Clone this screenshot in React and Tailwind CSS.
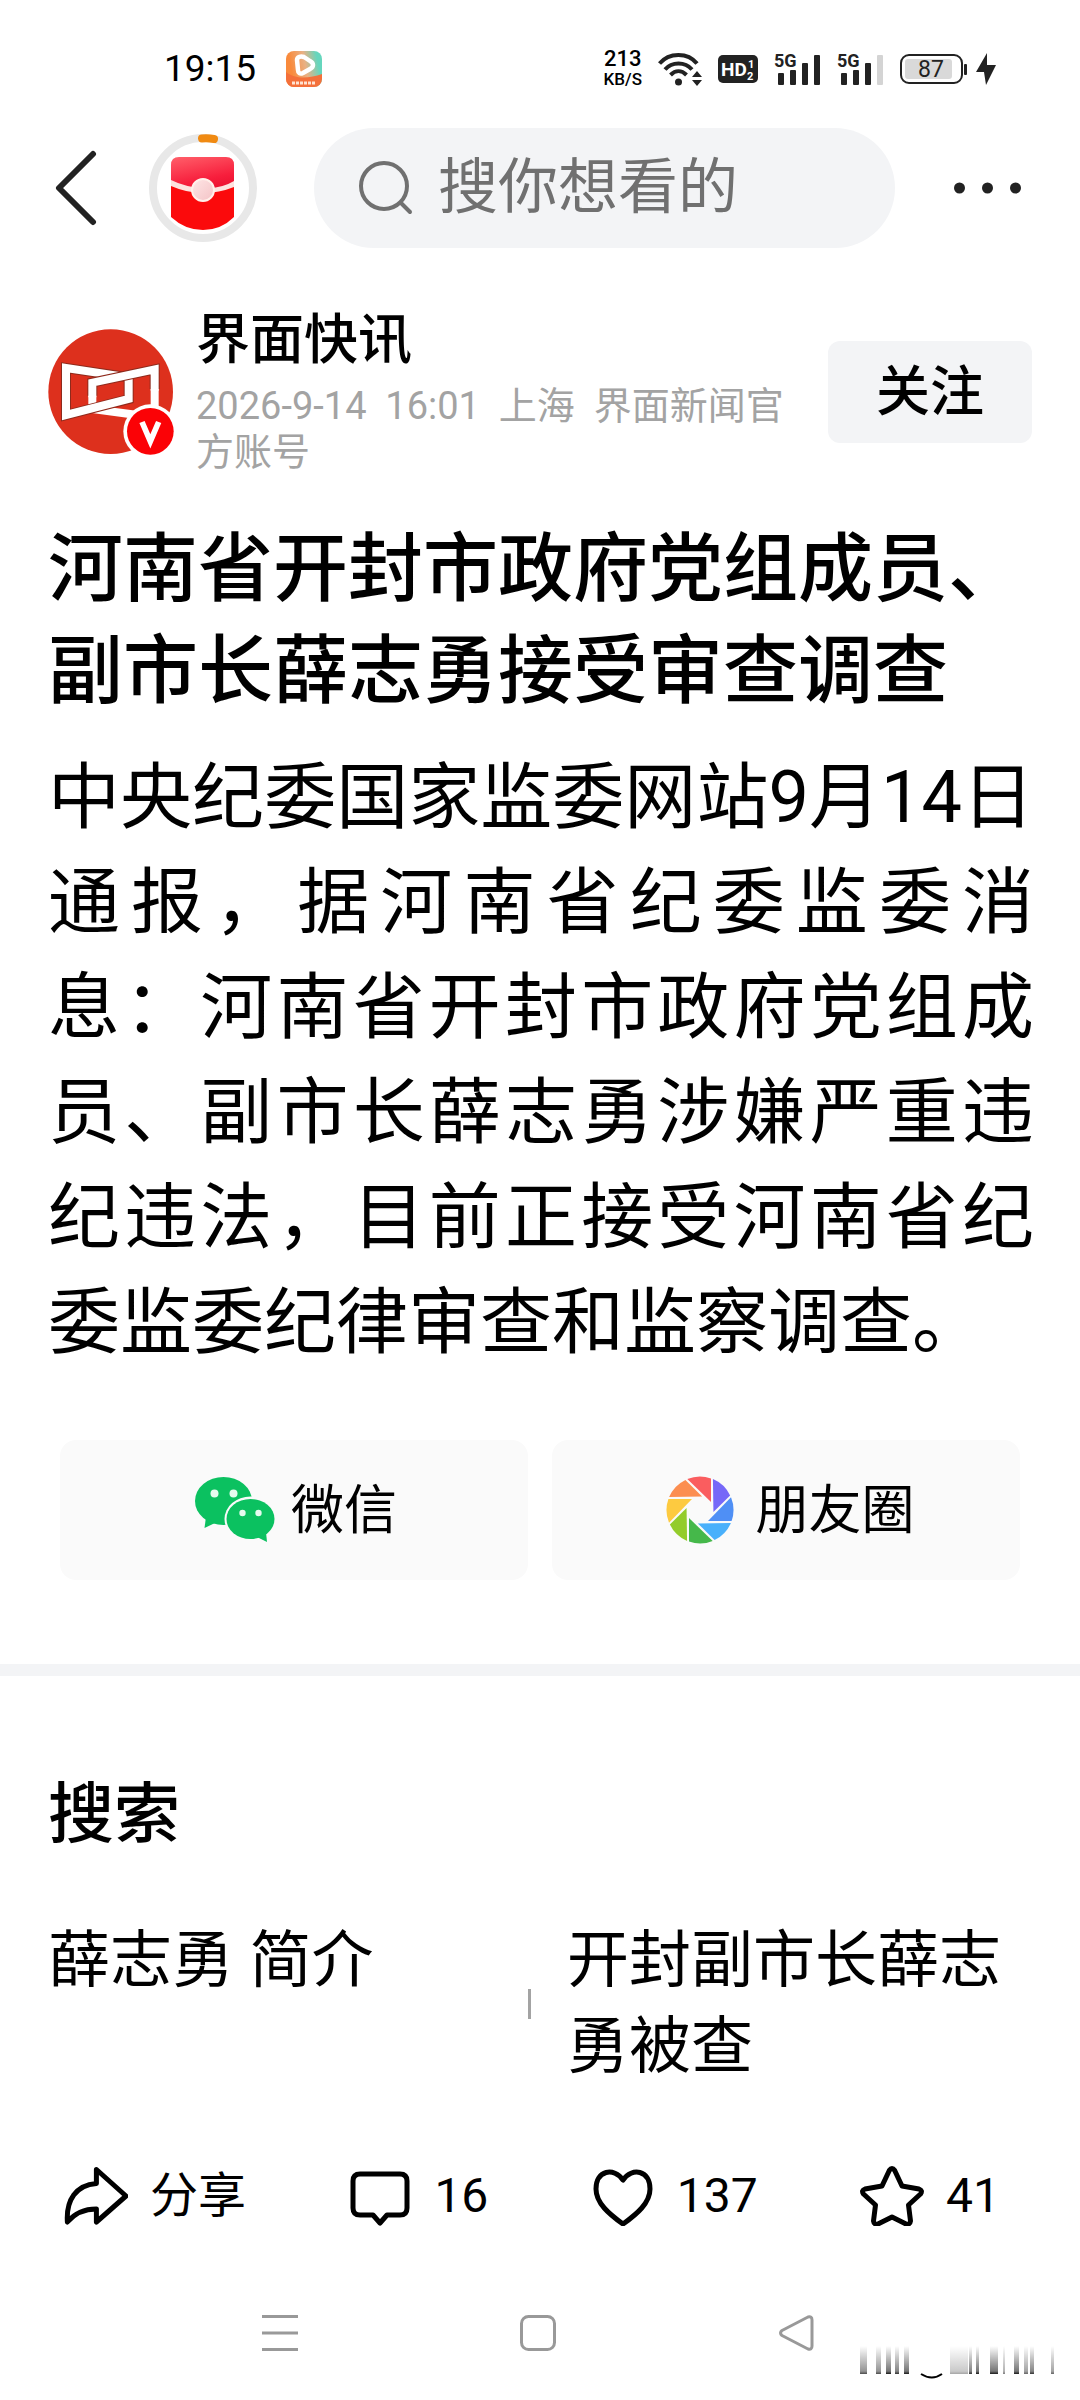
import { useState } from "react";

const shutterColors = [
  "#fa5d5f",
  "#7668f8",
  "#4f8ff5",
  "#49b0fb",
  "#45b84a",
  "#93cc2b",
  "#fdca40",
  "#fc8e50",
];

const related = ["薛志勇 简介", "开封副市长薛志勇被查"];

function AppBadgeIcon() {
  return (
    <svg className="size-9" viewBox="0 0 36 36" aria-hidden="true">
      <defs>
        <linearGradient id="badge" x1="0" y1="0.3" x2="1" y2="0.1">
          <stop offset="0.1" stopColor="#f98a3c" />
          <stop offset="0.5" stopColor="#e9b184" />
          <stop offset="0.85" stopColor="#66d6bd" />
        </linearGradient>
      </defs>
      <rect width="36" height="36" rx="8" fill="url(#badge)" />
      <path d="M0 21C10 29 24 27 36 23V28a8 8 0 0 1-8 8H8a8 8 0 0 1-8-8z" fill="#f4703a" />
      <path
        d="M11 9C11 5.500 15 5 18 6l6 4c4 2 4 6 0 8l-7 4c-3 1.500-5 0-5-3z"
        fill="none"
        stroke="#fff"
        strokeWidth="4.500"
        strokeLinejoin="round"
      />
      <path d="M6 32h24" stroke="#ffe3d2" strokeWidth="3" strokeDasharray="3 1" />
    </svg>
  );
}

function WifiIcon() {
  return (
    <svg className="h-9 w-11" viewBox="0 0 44 36" aria-hidden="true">
      <g fill="none" stroke="#222" strokeWidth="4">
        <path d="M1.500 12.500C11 1 30 1 39 12.500" />
        <path d="M7 18.500c7-8 20-8 27 0" />
        <path d="M12.500 24c5-5 11-5 16 0" />
      </g>
      <circle cx="20.500" cy="31" r="3.500" fill="#222" />
      <path d="M39 20l5 6H34zM39 35l5-6H34z" fill="#222" />
    </svg>
  );
}

function HdIcon() {
  return (
    <svg className="h-7 w-10" viewBox="0 0 40 28" aria-label="HD">
      <rect width="40" height="28" rx="5" fill="#222" />
      <g fill="#fff" fontFamily="Roboto, sans-serif" fontWeight="700">
        <text x="3" y="21" fontSize="19">HD</text>
        <text x="30" y="13" fontSize="11">1</text>
        <text x="29" y="25" fontSize="11">2</text>
      </g>
    </svg>
  );
}

function SignalIcon({ weak }) {
  return (
    <svg className="h-10 w-[47px]" viewBox="0 -4 47 40" aria-label="5G">
      <text x="0" y="14" fontSize="18" fontWeight="700" fontFamily="Roboto, sans-serif" fill="#222">
        5G
      </text>
      <rect x="4" y="20" width="6" height="12" rx="1" fill="#222" />
      <rect x="16" y="17" width="6" height="15" rx="1" fill="#222" />
      <rect x="28" y="10" width="6" height="22" rx="1" fill="#222" />
      <rect x="40" y="2" width="6" height="30" rx="1" fill={weak ? "#d4d4d4" : "#222"} />
    </svg>
  );
}

function BatteryIcon() {
  return (
    <svg className="h-8 w-[68px]" viewBox="0 0 68 32" aria-label="87%">
      <rect x="1" y="2" width="61" height="28" rx="8" fill="#fff" stroke="#222" strokeWidth="2" />
      <rect x="5" y="6" width="47" height="20" rx="3" fill="#d9d9d9" />
      <rect x="64" y="11" width="3" height="11" rx="1" fill="#222" />
      <text x="31" y="24" fontSize="23" textAnchor="middle" fontFamily="Roboto, sans-serif" fill="#222">
        87
      </text>
    </svg>
  );
}

function StatusBar() {
  return (
    <div className="flex h-12 items-center justify-between pl-[164px] pr-[84px] text-black">
      <div className="flex items-center gap-[30px]">
        <span className="text-[37px]">19:15</span>
        <AppBadgeIcon />
      </div>
      <div className="flex items-center">
        <div className="flex flex-col items-center font-medium">
          <span className="text-[22px] leading-5">213</span>
          <span className="text-[17px] leading-5">KB/S</span>
        </div>
        <div className="ml-4 flex items-center gap-4">
          <WifiIcon />
          <HdIcon />
          <SignalIcon />
          <SignalIcon weak />
          <div className="flex items-center gap-2">
            <BatteryIcon />
            <svg className="h-8 w-5" viewBox="0 0 20 32" aria-hidden="true">
              <path d="M11 0L0 19h8L10 32 20 12H11z" fill="#222" />
            </svg>
          </div>
        </div>
      </div>
    </div>
  );
}

function RedPacket() {
  return (
    <svg className="size-[108px]" viewBox="0 0 108 108" aria-hidden="true">
      <defs>
        <linearGradient id="flap" x1="0.2" y1="0" x2="0.6" y2="1">
          <stop offset="0" stopColor="#ff5a66" />
          <stop offset="0.7" stopColor="#f71e3c" />
          <stop offset="1" stopColor="#ec1230" />
        </linearGradient>
        <linearGradient id="knob" x1="0" y1="0" x2="1" y2="1">
          <stop offset="0" stopColor="#ffe6e6" />
          <stop offset="1" stopColor="#f3c3c6" />
        </linearGradient>
      </defs>
      <circle cx="54" cy="54" r="50" fill="#fff" stroke="#e8e8e8" strokeWidth="8" />
      <path d="M53 4.500Q59 4 65 5" fill="none" stroke="#f08a12" strokeWidth="8" strokeLinecap="round" />
      <path d="M22 45h63v38Q72 96 54 96T22 83z" fill="#fb0a0c" />
      <path d="M22 31q0-8 8-8h47q8 0 8 8v17Q54 64 22 48z" fill="url(#flap)" />
      <path d="M22 46Q36 53 54 54T85 47v6Q70 59 54 59T22 52z" fill="#fde3df" />
      <circle cx="54" cy="56" r="11" fill="url(#knob)" stroke="#fff0ea" strokeWidth="2" />
    </svg>
  );
}

function Header() {
  return (
    <header className="mt-[35px] flex h-[120px] items-center pl-[53px] pr-14">
      <button aria-label="返回">
        <svg className="h-[76px] w-11" viewBox="0 0 44 76" aria-hidden="true">
          <path
            d="M40 4L6 38l34 34"
            fill="none"
            stroke="#222"
            strokeWidth="6"
            strokeLinecap="round"
            strokeLinejoin="round"
          />
        </svg>
      </button>
      <button className="ml-[52px]" aria-label="红包">
        <RedPacket />
      </button>
      <label className="ml-[57px] flex h-full min-w-0 flex-1 items-center rounded-full bg-[#f3f4f6] pl-11">
        <svg className="size-14 shrink-0" viewBox="0 0 56 56" aria-hidden="true">
          <g fill="none" stroke="#707070" strokeWidth="4" strokeLinecap="round">
            <circle cx="26" cy="26" r="23" />
            <path d="M43 43l9 9" />
          </g>
        </svg>
        <input
          type="text"
          aria-label="搜索"
          placeholder="搜你想看的"
          className="ml-6 w-full min-w-0 bg-transparent text-[60px] leading-[80px] text-[#707070] outline-none placeholder:text-[#707070]"
        />
      </label>
      <button className="ml-14" aria-label="更多">
        <svg className="h-10 w-[73px]" viewBox="0 0 73 40" fill="#222" aria-hidden="true">
          <circle cx="8.500" cy="20" r="5.500" />
          <circle cx="36.500" cy="20" r="5.500" />
          <circle cx="64.500" cy="20" r="5.500" />
        </svg>
      </button>
    </header>
  );
}

function Avatar() {
  return (
    <svg className="size-[126px] shrink-0" viewBox="0 0 378 378" aria-label="界面快讯">
      <circle cx="188" cy="188" r="187" fill="#dd301d" />
      <g fill="none" strokeLinejoin="miter">
        <path d="M133 161V240L320 265V121z" stroke="#fff" strokeWidth="24" />
        <path d="M54 117L242 145V210L54 258z" stroke="#8f2a1c" strokeWidth="30" />
        <path d="M54 117L242 145V210L54 258z" stroke="#fff" strokeWidth="24" />
        <path d="M133 200V161L320 121V180" stroke="#8f2a1c" strokeWidth="30" />
        <path d="M133 205V161L320 121V185" stroke="#fff" strokeWidth="24" />
      </g>
      <circle cx="307" cy="307" r="81" fill="#fff" />
      <circle cx="307" cy="307" r="70" fill="#fb0206" />
      <path d="M282 279l25 58 25-58" fill="none" stroke="#fff" strokeWidth="17" />
    </svg>
  );
}

function WechatIcon() {
  return (
    <svg className="h-[66px] w-20" viewBox="0 0 80 66" aria-hidden="true">
      <g fill="#0bc160">
        <ellipse cx="28.500" cy="24" rx="28.500" ry="24" />
        <path d="M11 40L9.500 51 20 46z" />
      </g>
      <ellipse cx="55.500" cy="42" rx="26" ry="22.500" fill="#fafafa" />
      <g fill="#0bc160">
        <ellipse cx="55.500" cy="42" rx="24" ry="20" />
        <path d="M62 60l10 5-1-10z" />
      </g>
      <g fill="#e6fbef">
        <circle cx="19.500" cy="16.500" r="4" />
        <circle cx="38.500" cy="16.500" r="4" />
        <circle cx="47.500" cy="36" r="3.200" />
        <circle cx="63.500" cy="36" r="3.200" />
      </g>
    </svg>
  );
}

function MomentsIcon() {
  return (
    <svg className="size-[68px]" viewBox="-34 -34 68 68" aria-hidden="true">
      {shutterColors.map((color, i) => (
        <path
          key={color}
          d="M-12.700-31A33.500 33.500 0 0 1 11-31.600V-8z"
          fill={color}
          transform={`rotate(${i * 45})`}
        />
      ))}
    </svg>
  );
}

function Article() {
  const [followed, setFollowed] = useState(false);

  return (
    <article className="px-12 text-black">
      {/* Author */}
      <div className="mt-[61px] flex items-center">
        <Avatar />
        <div className="ml-[22px] mr-5 min-w-0 flex-1">
          <h2 className="text-[54px] font-medium leading-[64px]">界面快讯</h2>
          <p className="mt-[10px] whitespace-pre-wrap text-[38px] leading-[46px] text-[#a3a3a3]">
            {"2026-9-14  16:01  上海  界面新闻官方账号"}
          </p>
        </div>
        <button
          onClick={() => setFollowed(!followed)}
          className="h-[102px] w-[204px] rounded-xl bg-[#f3f4f6] text-[54px] font-medium"
        >
          {followed ? "已关注" : "关注"}
        </button>
      </div>

      {/* Text */}
      <h1 className="mt-[43px] text-[75px] font-medium leading-[102px]">
        河南省开封市政府党组成员、副市长薛志勇接受审查调查
      </h1>
      <p className="-mr-0.5 mt-[23px] text-justify text-[72px] leading-[105px]">
        中央纪委国家监委网站9月14日通报，据河南省纪委监委消息：河南省开封市政府党组成员、副市长薛志勇涉嫌严重违纪违法，目前正接受河南省纪委监委纪律审查和监察调查。
      </p>

      {/* Share */}
      <div className="mt-[65px] grid grid-cols-2 gap-6 px-3 text-[53px]">
        <button className="flex h-[140px] items-center justify-center gap-4 rounded-2xl bg-[#fafafa] pl-1">
          <WechatIcon />
          <span className="pt-1">微信</span>
        </button>
        <button className="flex h-[140px] items-center justify-center gap-[22px] rounded-2xl bg-[#fafafa] pl-2">
          <MomentsIcon />
          <span className="pt-1">朋友圈</span>
        </button>
      </div>
    </article>
  );
}

function RelatedSearch() {
  return (
    <section className="px-12 text-black">
      <h2 className="mt-[99px] text-[66px] font-medium leading-[80px]">搜索</h2>
      <div className="mt-[63px] flex items-stretch text-[62px] leading-[86px]">
        <a href="#search" className="flex-1">
          {related[0]}
        </a>
        <span className="h-[30px] w-[3px] self-center bg-[#a3a3a3]" />
        <a href="#search" className="ml-9 w-[465px]">
          {related[1]}
        </a>
      </div>
    </section>
  );
}

const actions = [
  {
    label: "分享",
    d: "M3.400 56C2 34 12 19 32.400 17.500V3.500L62 30 32.400 56V43C20 43 11 47 3.400 56z",
  },
  {
    label: "16",
    d: "M12 8h40q7 0 7 7v27q0 7-7 7h-13l-7 8-7-8H12q-7 0-7-7V15q0-7 7-7z",
  },
  {
    label: "137",
    d: "M32 14C23 1 5 4 5 23c0 14 13 25 27 35 14-10 27-21 27-35C59 4 41 1 32 14z",
  },
  {
    label: "41",
    d: "M29.300 4.500q2.700-4 5.400 0l7.300 15.500 17 3q4 1.500 1.500 5L48.500 39l2 16q-.5 4-4.500 3L32 51l-14 7q-4 1-4.500-3l2-16L3.500 28q-2.500-3.500 1.500-5l17-3z",
  },
];

function ActionBar() {
  return (
    <div className="mt-[76px] flex items-center justify-between pl-16 pr-20 text-[48px] leading-[60px] text-black">
      {actions.map((a) => (
        <button key={a.label} className="flex items-center gap-[22px]">
          <svg className="h-[60px] w-16" viewBox="0 0 64 60" aria-hidden="true">
            <path d={a.d} fill="none" stroke="#000" strokeWidth="5" strokeLinejoin="round" />
          </svg>
          {a.label}
        </button>
      ))}
    </div>
  );
}

function SystemNav() {
  return (
    <nav className="mt-[89px] flex items-center justify-center gap-[222px] pb-[49px] pr-1">
      <button aria-label="菜单">
        <svg className="size-9" viewBox="0 0 36 36" stroke="#999" strokeWidth="3">
          <path d="M0 1.500h36M0 18h36M0 34.500h36" />
        </svg>
      </button>
      <button aria-label="主页">
        <svg className="size-9" viewBox="0 0 36 36" fill="none" stroke="#999" strokeWidth="3">
          <rect x="1.500" y="1.500" width="33" height="33" rx="7" />
        </svg>
      </button>
      <button aria-label="后退">
        <svg className="size-9" viewBox="0 0 36 36" fill="none" stroke="#999" strokeWidth="3">
          <path d="M30 2Q34 1 34 5V31Q34 35 30 34L4 20.500Q1 18 4 15.500z" strokeLinejoin="round" />
        </svg>
      </button>
    </nav>
  );
}

// x offset, width, peak opacity
const fadedBars = [
  [0, 7, 0.7],
  [16, 5, 0.7],
  [26, 5, 0.9],
  [35, 4, 0.8],
  [44, 5, 0.9],
  [90, 18, 0.35],
  [109, 3, 0.8],
  [116, 3, 0.9],
  [130, 8, 0.9],
  [143, 2, 0.5],
  [154, 5, 0.9],
  [164, 4, 0.6],
  [170, 4, 0.8],
  [191, 3, 0.6],
];

function FadedMark() {
  return (
    <svg className="absolute bottom-5 right-6 h-9 w-[196px]" viewBox="0 0 196 36" aria-hidden="true">
      <defs>
        <linearGradient id="fade" x1="0" y1="0" x2="0" y2="1">
          <stop offset="0" stopColor="#000" stopOpacity="0" />
          <stop offset="0.9" stopColor="#000" stopOpacity="0.6" />
          <stop offset="1" stopColor="#000" />
        </linearGradient>
      </defs>
      {fadedBars.map(([x, w, o]) => (
        <rect key={x} x={x} y="2" width={w} height="28" fill="url(#fade)" opacity={o} />
      ))}
      <path d="M61 30q11 7 21 0" fill="none" stroke="#000" strokeWidth="2" />
    </svg>
  );
}

export default function App() {
  return (
    <div className="relative min-h-screen bg-white pt-[45px] font-[Roboto,'Noto_Sans_CJK_SC',sans-serif]">
      <StatusBar />
      <Header />
      <Article />
      <hr className="mt-[84px] h-3 border-0 bg-[#f3f4f6]" />
      <RelatedSearch />
      <ActionBar />
      <SystemNav />
      <FadedMark />
    </div>
  );
}
